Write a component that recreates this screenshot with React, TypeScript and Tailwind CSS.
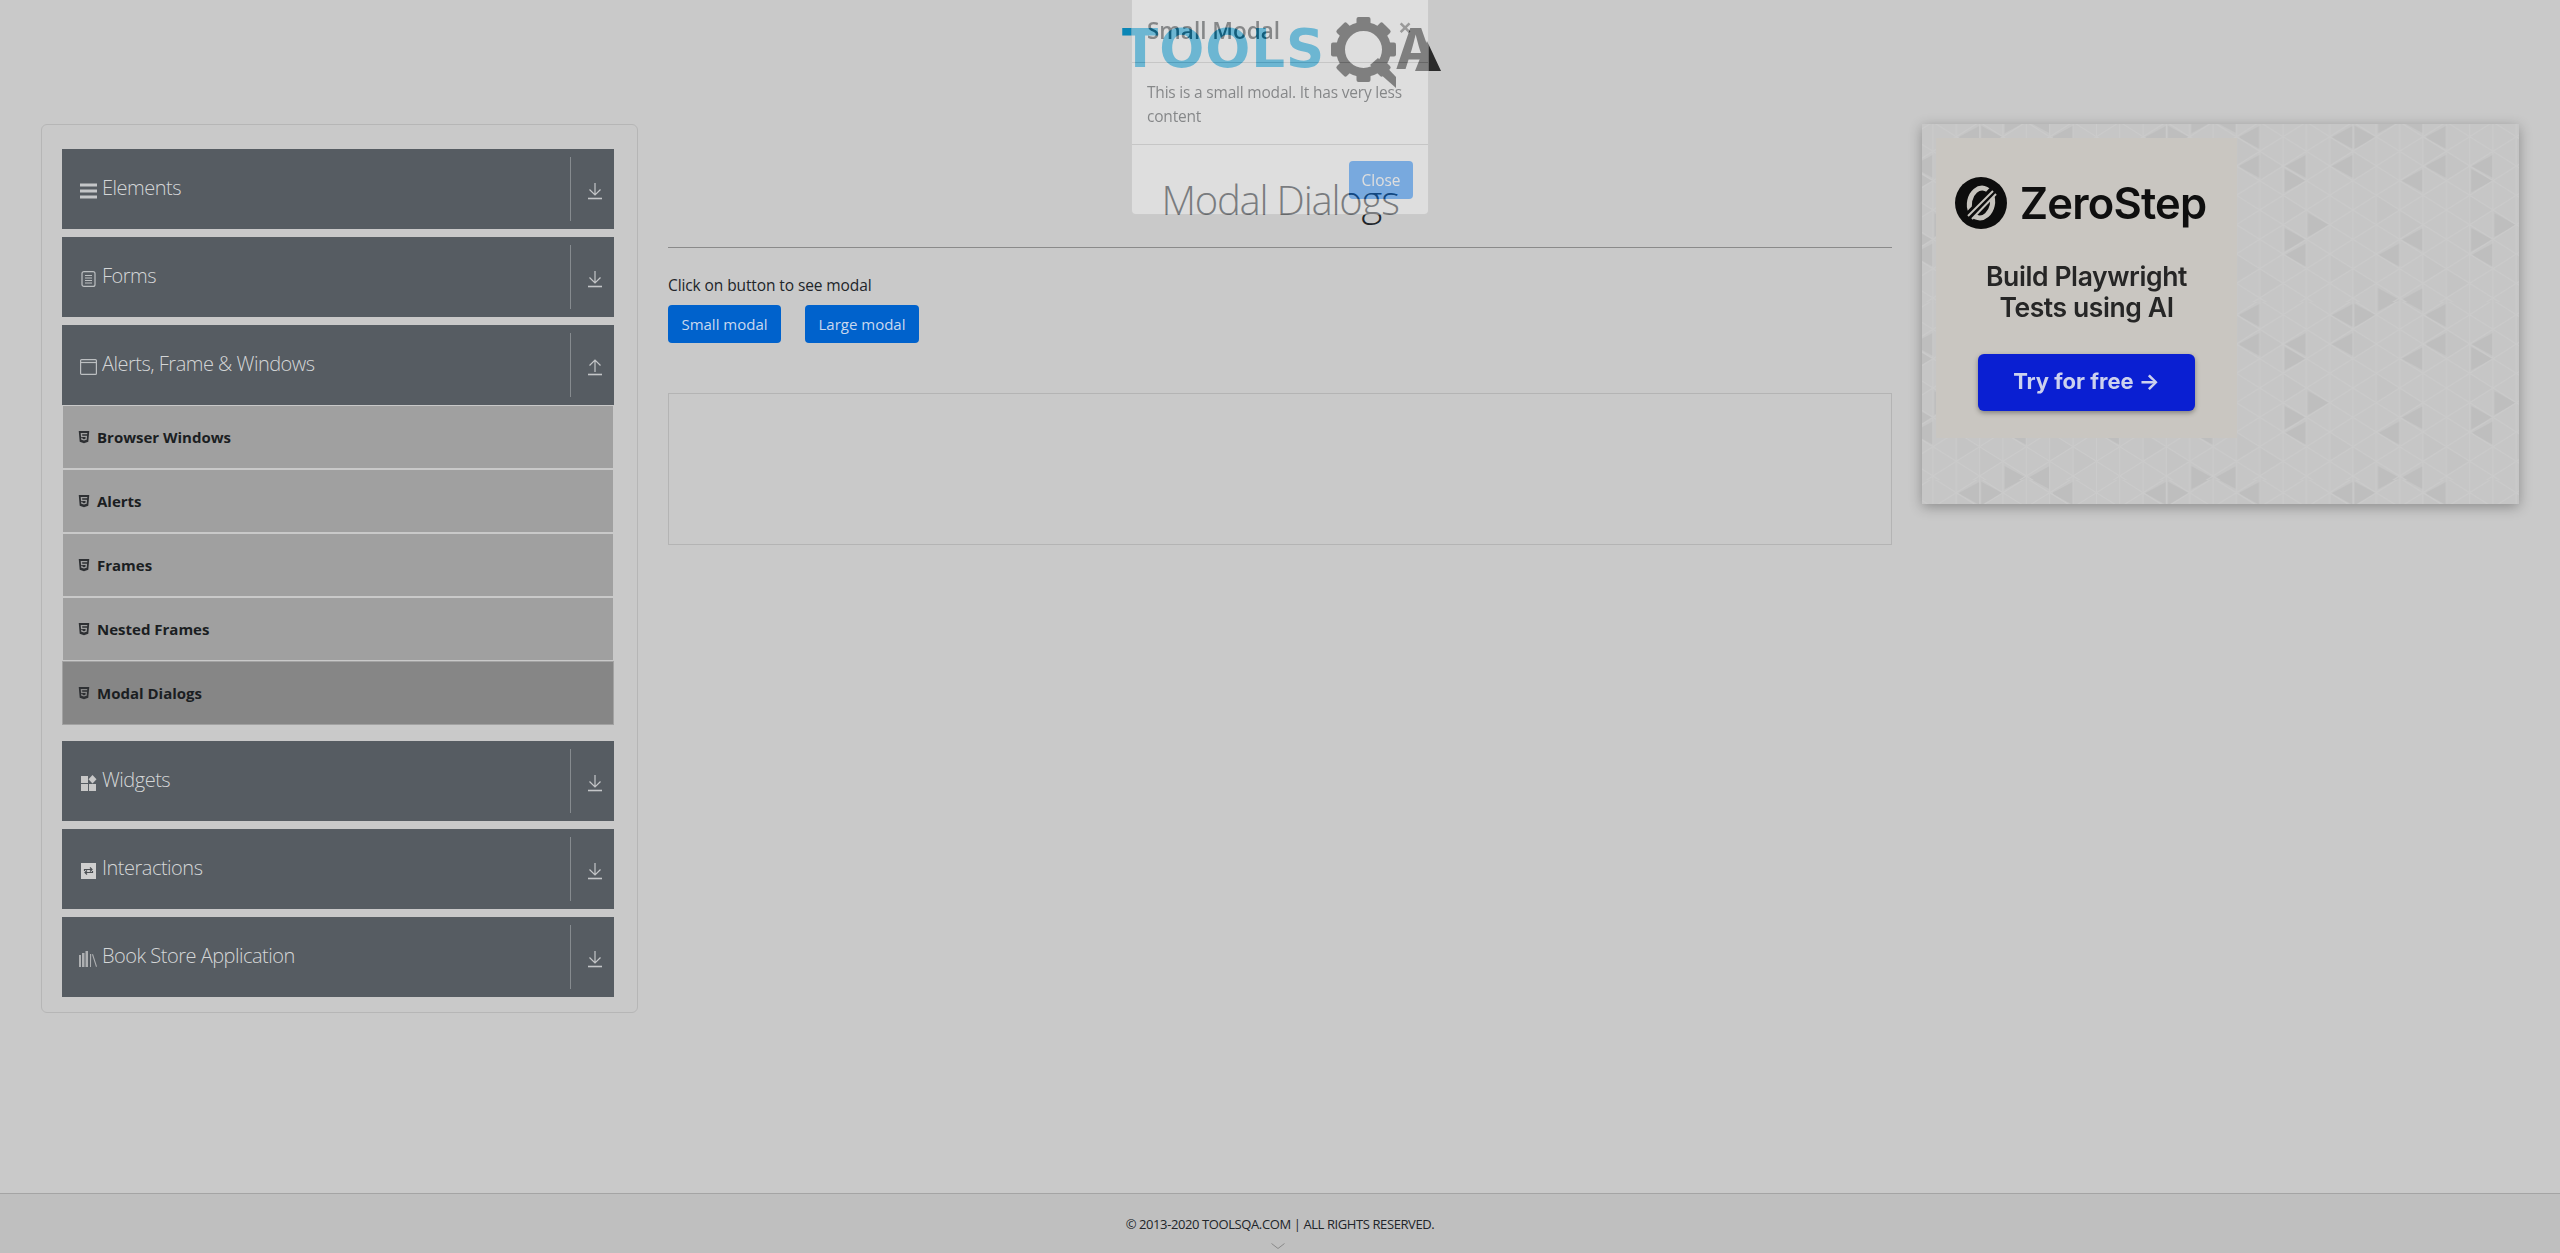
import React from 'react';
import { FaHtml5 } from 'react-icons/fa';

const W = 70 / 3;
const S = 88 / 3;

// dark triangles of the ad background: [base x, top y, direction], in 3x crop units
const darkTriangles: [number, number, number][] = [
  [60, 5, -1], [340, 5, -1], [345, 5, 1], [60, 92, -1], [200, 92, -1], [340, 92, -1],
  [135, 135, 1], [550, 135, -1], [205, 268, 1], [135, 312, 1], [200, 358, -1],
  [480, 358, -1], [550, 312, -1], [415, 492, 1], [550, 492, -1], [415, -42, 1], [550, -42, -1],
];

function AdPattern() {
  const columns = [0, 1, 2, 3, 4, 5, 6, 7, 8];
  const rows = [-1, 0, 1, 2, 3, 4, 5, 6];
  return (
    <svg className="absolute inset-0 w-full h-full blur-[0.6px]" aria-hidden="true">
      <defs>
        <pattern id="tri" patternUnits="userSpaceOnUse" width={W * 8} height={178} x={131}>
          <rect width={W * 8} height={178} fill="#c6c6c6" />
          {columns.map((c) =>
            rows.map((r) => {
              const x = (60 + 70 * c) / 3 - W;
              const y = r * S + (c % 2 ? 0 : S / 2) - 2;
              return (c * 3 + r * 5) % 4 === 0 ? (
                <polygon key={`${c}-${r}`} fill="#c4c4c4" points={`${x},${y} ${x},${y + S} ${x + W},${y + S / 2}`} />
              ) : null;
            })
          )}
          {darkTriangles.map(([x, y, d], i) => (
            <polygon
              key={i}
              fill="#bebebe"
              points={`${x / 3},${y / 3} ${x / 3},${(y + 70) / 3} ${x / 3 + (d * 64) / 3},${(y + 35) / 3}`}
            />
          ))}
          {columns.map((c) =>
            rows.map((r) => {
              const x = (60 + 70 * c) / 3 - W;
              const y = r * S + (c % 2 ? 0 : S / 2) - 2;
              return (
                <g key={`${c}-${r}`} stroke="#cbcbcb" strokeWidth="1.1">
                  <line x1={x} y1={y} x2={x} y2={y + S} />
                  <line x1={x} y1={y} x2={x + W} y2={y + S / 2} />
                  <line x1={x} y1={y} x2={x + W} y2={y - S / 2} />
                </g>
              );
            })
          )}
        </pattern>
      </defs>
      <rect width="100%" height="100%" fill="url(#tri)" />
    </svg>
  );
}

function ZeroStepMark() {
  return (
    <svg viewBox="0 0 52 52" className="w-[52px] h-[52px] shrink-0">
      <circle cx="26" cy="26" r="26" fill="#0d0d0d" />
      <ellipse cx="26" cy="26" rx="11.5" ry="15" fill="none" stroke="#c6c3bd" strokeWidth="5" transform="rotate(12 26 26)" />
      <line x1="12" y1="41" x2="41" y2="11" stroke="#0d0d0d" strokeWidth="9" />
      <line x1="13" y1="39" x2="38" y2="14" stroke="#c6c3bd" strokeWidth="2" />
      <line x1="17" y1="42" x2="41" y2="17" stroke="#c6c3bd" strokeWidth="2" />
    </svg>
  );
}

function ArrowDown() {
  return (
    <svg viewBox="0 0 16 18" className="w-[16px] h-[18px]" fill="none" stroke="#c4c6c8" strokeWidth="1.2">
      <path d="M8 1v12M2.5 7.5 8 13l5.5-5.5" />
      <path d="M1 16.5h14" strokeWidth="1.6" />
    </svg>
  );
}

function ArrowUp() {
  return (
    <svg viewBox="0 0 16 18" className="w-[16px] h-[18px]" fill="none" stroke="#c4c6c8" strokeWidth="1.2">
      <path d="M8 14V2M2.5 7.5 8 2l5.5 5.5" />
      <path d="M1 16.5h14" strokeWidth="1.6" />
    </svg>
  );
}

function BarsIcon() {
  return (
    <svg viewBox="0 0 17 16" className="w-[17px] h-[16px]" fill="#c4c6c8">
      <rect y="0.5" width="17" height="3" />
      <rect y="6.5" width="17" height="3" />
      <rect y="12.5" width="17" height="3" />
    </svg>
  );
}

function FormIcon() {
  return (
    <svg viewBox="0 0 17 16" className="w-[17px] h-[16px]" fill="none" stroke="#bcbfc1" strokeWidth="1.2">
      <rect x="2" y="0.6" width="13" height="14.8" rx="2" />
      <path d="M5 4.5h7M5 7h7M5 9.5h7M5 12h7" strokeWidth="1" />
    </svg>
  );
}

function WindowIcon() {
  return (
    <svg viewBox="0 0 17 16" className="w-[17px] h-[16px]" fill="none" stroke="#bcbfc1" strokeWidth="1.2">
      <rect x="0.6" y="0.6" width="15.8" height="14.8" rx="1" />
      <path d="M0.6 3.5h15.8" />
    </svg>
  );
}

function WidgetIcon() {
  return (
    <svg viewBox="0 0 17 16" className="w-[17px] h-[16px]" fill="#c8c8c8">
      <rect x="1" y="1" width="7" height="7" />
      <rect x="1" y="9" width="7" height="7" />
      <rect x="9" y="9" width="7" height="7" />
      <path d="M12.5 0 16.5 4.2 12.5 8.4 8.5 4.2z" />
    </svg>
  );
}

function RepeatIcon() {
  return (
    <svg viewBox="0 0 17 16" className="w-[17px] h-[16px]">
      <rect x="1" y="0" width="15" height="16" fill="#cfcfcf" />
      <path d="M4.5 8V6.5h7M10 4.5l2 2-2 2M12.5 8v1.5h-7M7 11.5l-2-2 2-2" fill="none" stroke="#4b4f53" strokeWidth="1.2" />
    </svg>
  );
}

function BooksIcon() {
  return (
    <svg viewBox="0 0 18 16" className="w-[18px] h-[16px]" fill="#aeb0b2">
      <rect x="0" y="4" width="2" height="12" />
      <rect x="3" y="2" width="2.5" height="14" />
      <rect x="6.5" y="0" width="2.5" height="16" />
      <path d="M11 3h1.2l-.2 13H11zM13 3.5l1-.4 4 12.5-1 .4z" />
    </svg>
  );
}

function GearLogo() {
  const teeth = [0, 45, 90, 135, 180, 225, 270, 315];
  return (
    <svg viewBox="0 0 68 72" className="w-[68px] h-[72px] shrink-0" fill="#2a2a2a">
      {teeth.map((a) => (
        <rect key={a} x="26.5" y="0" width="14" height="12" rx="2" transform={`rotate(${a} 33.5 32.5)`} />
      ))}
      <circle cx="33.5" cy="32.5" r="23" fill="none" stroke="#2a2a2a" strokeWidth="9" />
      <path d="M40 48 48 41 66 60V71z" />
    </svg>
  );
}

const menuItems = ['Browser Windows', 'Alerts', 'Frames', 'Nested Frames', 'Modal Dialogs'];

function MenuBar({ icon, label, open }: { icon: React.ReactNode; label: string; open?: boolean }) {
  return (
    <div className="h-[80px] bg-[#565c62] flex items-center py-2 pl-[17px]">
      <div className="w-[18px] mt-[4px] flex justify-center shrink-0">{icon}</div>
      <span className="ml-[5px] flex-1 text-[20px] leading-[24px] font-light tracking-[-0.5px] text-[#d4d6d7] -mt-[2px]">{label}</span>
      <div className="h-full w-[44px] border-l border-[#868b8f] flex items-center justify-center pl-[4px] pt-[4px]">
        {open ? <ArrowUp /> : <ArrowDown />}
      </div>
    </div>
  );
}

export default function App() {
  return (
    <div className="relative h-screen overflow-hidden flex flex-col bg-[#c9c9c9] text-[#212529] font-['Open_Sans','Noto_Sans',sans-serif]">
      <header className="h-[124px] shrink-0 pt-[17px] pl-[1122px] flex items-start">
        <span className="mt-[-4px] font-['DejaVu_Sans',sans-serif] font-bold text-[53px] leading-[72px] tracking-[1px] text-[#0a85b5] w-[208px]">TOOLS</span>
        <GearLogo />
        <span className="relative -ml-[3px] mt-[-4px] font-['Inter',sans-serif] font-bold text-[56px] leading-[72px] text-[#2a2a2a]">
          A
          <svg viewBox="0 0 30 30" className="absolute right-[-4px] bottom-[14px] w-[30px] h-[30px]" fill="#2a2a2a">
            <path d="M16 0 30 30H4z" />
          </svg>
        </span>
      </header>

      <div className="flex-1 grid grid-cols-[597px_1224px_597px] gap-x-[30px] px-[41px] items-start">
        <aside className="h-[889px] rounded-[6px] border border-[#b6b6b6] pl-[20px] pr-[23px] pt-[24px]">
          <div className="flex flex-col gap-[8px]">
            <MenuBar icon={<BarsIcon />} label="Elements" />
            <MenuBar icon={<FormIcon />} label="Forms" />
            <div>
              <MenuBar icon={<WindowIcon />} label="Alerts, Frame & Windows" open />
              <ul className="mb-[8px]">
                {menuItems.map((item) => (
                  <li
                    key={item}
                    className={
                      item === 'Modal Dialogs'
                        ? 'h-[64px] bg-[#868686] border border-[#a2a2a2] flex items-center pl-[14px]'
                        : 'h-[64px] mx-px bg-[#a0a0a0] border-y border-[#c9c9c9] flex items-center pl-[14px]'
                    }
                  >
                    <FaHtml5 className="w-[14px] h-[14px] text-[#2e3033] -mt-[1px]" />
                    <span className="ml-[6px] text-[15px] font-bold text-[#1b1e22]">{item}</span>
                  </li>
                ))}
              </ul>
            </div>
            <MenuBar icon={<WidgetIcon />} label="Widgets" />
            <MenuBar icon={<RepeatIcon />} label="Interactions" />
            <MenuBar icon={<BooksIcon />} label="Book Store Application" />
          </div>
        </aside>

        <main>
          <h1 className="pt-[52px] text-center text-[40px] leading-[48px] font-light tracking-[-1.2px] text-[#212529]">Modal Dialogs</h1>
          <div className="mt-[23px] h-px bg-[#8a8a8a]" />
          <p className="mt-[25px] text-[15.5px] leading-[24px] tracking-[-0.1px]">Click on button to see modal</p>
          <div className="mt-[8px] flex gap-[24px]">
            <button className="h-[38px] w-[113px] rounded-[4px] bg-[#0062cc] text-[15px] text-[#c9d8ee]">Small modal</button>
            <button className="h-[38px] w-[114px] rounded-[4px] bg-[#0062cc] text-[15px] text-[#c9d8ee]">Large modal</button>
          </div>
          <div className="mt-[50px] h-[152px] border border-[#b4b4b4]" />
        </main>

        <section className="relative h-[380px] overflow-hidden shadow-[0_3px_12px_rgba(0,0,0,0.3)] font-['Inter',sans-serif]">
          <AdPattern />
          <div className="relative ml-[14px] mt-[14px] w-[301px] h-[300px] bg-[#c9c6c1] flex flex-col items-center blur-[0.4px]">
            <div className="mt-[39px] flex items-center gap-[13px] -ml-[12px]">
              <ZeroStepMark />
              <span className="text-[43.5px] leading-[52px] font-semibold tracking-[-0.8px] text-[#0f0f0f]">ZeroStep</span>
            </div>
            <p className="mt-[32px] text-center text-[26.5px] leading-[31px] font-semibold tracking-[-0.4px] text-[#262626]">
              Build Playwright
              <br />
              Tests using AI
            </p>
            <div className="mt-[31px] pb-[2px] w-[217px] h-[57px] rounded-[6px] bg-[#0a1fd2] shadow-[0_2px_5px_rgba(0,0,0,0.35)] flex items-center justify-center text-[22px] font-bold text-[#ccd1ee]">
              Try for free →
            </div>
          </div>
        </section>
      </div>

      <footer className="relative h-[60px] shrink-0 bg-[#bfbfbf] border-t border-[#a4a4a4] flex justify-center pt-[20px]">
        <span className="text-[13px] leading-[20px] tracking-[-0.4px] text-[#212529]">© 2013-2020 TOOLSQA.COM | ALL RIGHTS RESERVED.</span>
        <svg viewBox="0 0 14 6" className="absolute left-[1271px] top-[49px] w-[14px] h-[6px]" fill="none" stroke="#8a8a8a">
          <path d="M0.5 0.5 7 5.5 13.5 0.5" />
        </svg>
      </footer>

      <div className="absolute left-[1131px] top-0 w-[298px] h-[215px] bg-white opacity-40 rounded-b-[5px] border border-black/20 border-t-0 flex flex-col">
        <div className="h-[63px] shrink-0 border-b border-[#c4c4c4] flex items-center justify-between pl-[15px] pr-[16px]">
          <span className="text-[22.5px] leading-[30px] font-semibold">Small Modal</span>
          <span className="-mt-[9px] text-[24px] leading-none font-bold text-[#555]">×</span>
        </div>
        <p className="h-[81px] shrink-0 pt-[17px] px-[15px] text-[15.5px] leading-[24px] tracking-[-0.2px]">This is a small modal. It has very less content</p>
        <div className="flex-1 border-t border-[#c4c4c4] flex justify-end pt-[16px] pr-[15px]">
          <button className="h-[38px] w-[64px] pt-[2px] rounded-[4px] bg-[#007bff] text-[15.5px] text-white">Close</button>
        </div>
      </div>
    </div>
  );
}
